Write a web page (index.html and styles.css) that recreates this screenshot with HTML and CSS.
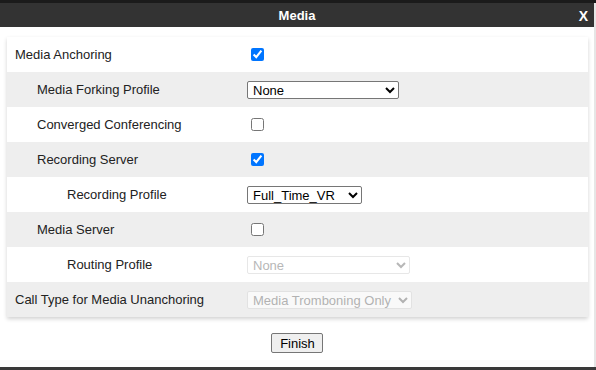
FILE: index.html
```html
<!DOCTYPE html>
<html lang="en">
<head>
    <meta charset="UTF-8">
    <title>Media</title>
    <link rel="stylesheet" href="styles.css">
</head>
<body>
    <div class="backdrop"></div>
    <div class="dialog">
        <div class="titlebar">
            <span class="title">Media</span>
            <span class="close">X</span>
        </div>

        <div class="content">
            <table class="panel">
                <tr>
                    <td class="label">Media Anchoring</td>
                    <td><input type="checkbox" checked></td>
                </tr>
                <tr>
                    <td class="label indent1">Media Forking Profile</td>
                    <td>
                        <select class="sel-forking">
                            <option>None</option>
                        </select>
                    </td>
                </tr>
                <tr>
                    <td class="label indent1">Converged Conferencing</td>
                    <td><input type="checkbox"></td>
                </tr>
                <tr>
                    <td class="label indent1">Recording Server</td>
                    <td><input type="checkbox" checked></td>
                </tr>
                <tr>
                    <td class="label indent2">Recording Profile</td>
                    <td>
                        <select class="sel-recording">
                            <option>Full_Time_VR</option>
                        </select>
                    </td>
                </tr>
                <tr>
                    <td class="label indent1">Media Server</td>
                    <td><input type="checkbox"></td>
                </tr>
                <tr>
                    <td class="label indent2">Routing Profile</td>
                    <td>
                        <select class="sel-routing" disabled>
                            <option>None</option>
                        </select>
                    </td>
                </tr>
                <tr>
                    <td class="label">Call Type for Media Unanchoring</td>
                    <td>
                        <select class="sel-calltype" disabled>
                            <option>Media Tromboning Only</option>
                        </select>
                    </td>
                </tr>
            </table>

            <div class="actions">
                <button>Finish</button>
            </div>
        </div>
    </div>
    <div class="backdrop-bottom"></div>
</body>
</html>
```

FILE: styles.css
```css
body {
    margin: 0;
    font-family: "Liberation Sans", Arial, sans-serif;
    font-size: 13px;
    color: #222;
    background-color: #fff;
}
.backdrop {
    height: 3px;
    background-color: #1b1b1b;
}
.backdrop-bottom {
    height: 3px;
    background-color: #3a3a3a;
}
.dialog {
    background: white;
    border-right: 2px solid #e6e6e6;
}
.titlebar {
    height: 24px;
    background-color: #333;
    color: white;
    display: flex;
    align-items: center;
    justify-content: center;
    position: relative;
}
.title {
    font-weight: bold;
    font-size: 13px;
}
.close {
    position: absolute;
    right: 6px;
    top: 5px;
    font-weight: bold;
    font-size: 14px;
}
.content {
    padding: 10px 7px 14px 7px;
}
.panel {
    width: 581px;
    border-collapse: collapse;
    box-shadow: 0 2px 4px rgba(0,0,0,0.18);
}
.panel tr {
    height: 35px;
}
.panel tr:nth-child(even) {
    background-color: #eeeeee;
}
.panel td {
    padding: 0;
    vertical-align: middle;
}
.label {
    width: 232px;
    padding-left: 8px !important;
}
.indent1 {
    padding-left: 30px !important;
    width: 210px;
}
.indent2 {
    padding-left: 60px !important;
    width: 180px;
}
input[type="checkbox"] {
    margin: 3px 3px 3px 4px;
    vertical-align: middle;
}
select {
    font-family: "Liberation Sans", Arial, sans-serif;
    font-size: 13px;
    height: 18px;
    padding: 0 0 0 1px;
    color: #000;
    background: white;
    border: 1px solid #767676;
    border-radius: 2px;
}
select:disabled {
    color: #999;
    border-color: #ddd;
}
.sel-forking {
    width: 152px;
}
.sel-recording {
    width: 115px;
}
.sel-routing {
    width: 163px;
}
.sel-calltype {
    width: 165px;
}
.actions {
    text-align: center;
    margin-top: 16px;
}
button {
    font-family: "Liberation Sans", Arial, sans-serif;
    font-size: 13px;
    height: 20px;
    padding: 0 7px 0 8px;
    background-color: #efefef;
    border: 1px solid #767676;
    border-radius: 2px;
    color: #000;
}
```
